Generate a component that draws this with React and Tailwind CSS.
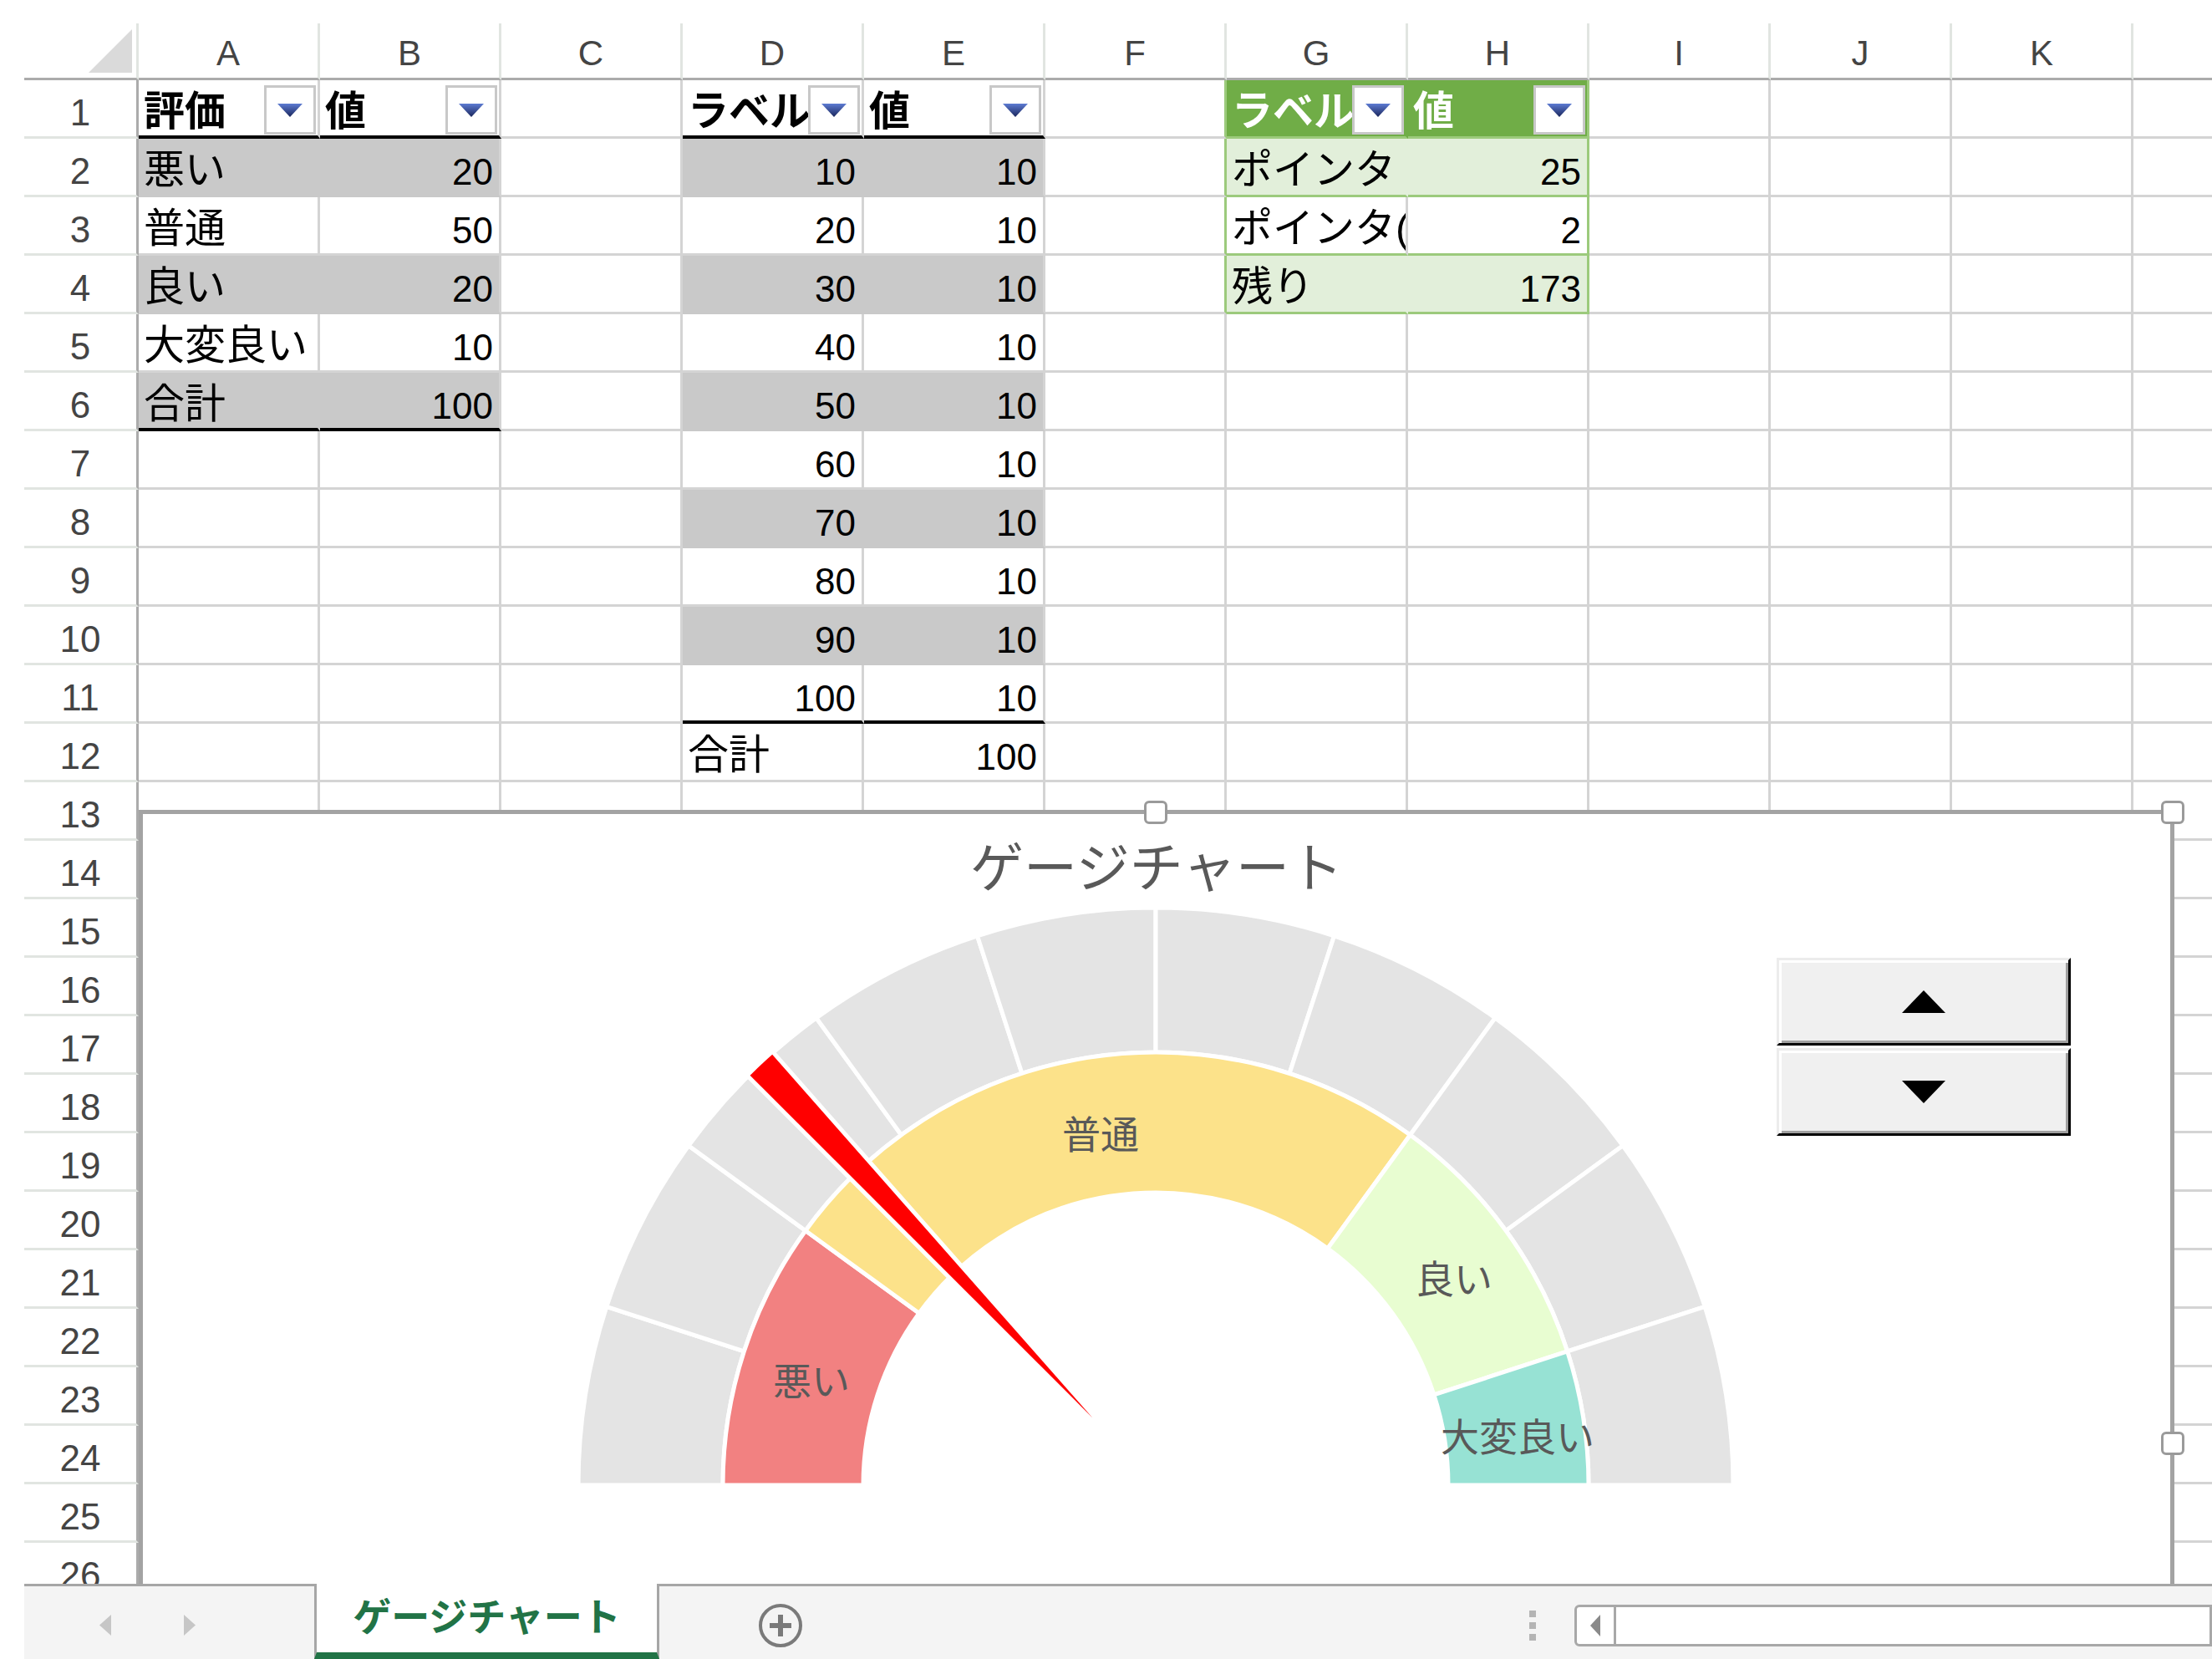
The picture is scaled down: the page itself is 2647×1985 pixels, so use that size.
import React from 'react';

const COLS = ['A', 'B', 'C', 'D', 'E', 'F', 'G', 'H', 'I', 'J', 'K', 'L'];

const BG = { white: 'bg-white', grey: 'bg-[#c9c9c9]', green: 'bg-[#70ad47]', lgreen: 'bg-[#e2efda]' };
const BR = {
  grid: 'border-r-[#d4d4d4]',
  grey: 'border-r-[#c9c9c9]',
  gline: 'border-r-[#9cca7c]',
  green: 'border-r-[#70ad47]',
  lgreen: 'border-r-[#e2efda]',
};
const BB = {
  grid: 'border-b-[3px] border-b-[#d4d4d4]',
  grey: 'border-b-[3px] border-b-[#c9c9c9]',
  black: 'border-b-[4px] border-b-black',
  gline: 'border-b-[3px] border-b-[#9cca7c]',
};

function buildCells() {
  const c = {};
  const set = (r, col, v) => {
    const k = r + col;
    c[k] = { ...(c[k] || {}), ...v };
  };
  set(1, 'A', { t: '評価', k: 'hdr', bb: 'black' });
  set(1, 'B', { t: '値', k: 'hdr', bb: 'black' });
  [['悪い', 20], ['普通', 50], ['良い', 20], ['大変良い', 10], ['合計', 100]].forEach(([l, v], i) => {
    const r = i + 2;
    const band = r % 2 === 0;
    const bb = r === 6 ? 'black' : band ? 'grey' : 'grid';
    set(r, 'A', { t: l, k: 'lbl', bg: band ? 'grey' : 'white', br: band ? 'grey' : 'grid', bb });
    set(r, 'B', { t: String(v), k: 'num', bg: band ? 'grey' : 'white', bb });
  });
  set(1, 'D', { t: 'ラベル', k: 'hdr', bb: 'black' });
  set(1, 'E', { t: '値', k: 'hdr', bb: 'black' });
  for (let i = 0; i < 10; i++) {
    const r = i + 2;
    const band = r % 2 === 0;
    const bb = r === 11 ? 'black' : band ? 'grey' : 'grid';
    set(r, 'D', { t: String((i + 1) * 10), k: 'num', bg: band ? 'grey' : 'white', br: band ? 'grey' : 'grid', bb });
    set(r, 'E', { t: '10', k: 'num', bg: band ? 'grey' : 'white', bb });
  }
  set(12, 'D', { t: '合計', k: 'lbl' });
  set(12, 'E', { t: '100', k: 'num' });
  for (let r = 1; r <= 4; r++) set(r, 'F', { br: 'gline' });
  set(1, 'G', { t: 'ラベル', k: 'ghdr', bg: 'green', br: 'green', bb: 'gline' });
  set(1, 'H', { t: '値', k: 'ghdr', bg: 'green', br: 'gline', bb: 'gline' });
  [['ポインタ', 25], ['ポインタ(幅)', 2], ['残り', 173]].forEach(([l, v], i) => {
    const r = i + 2;
    const band = r !== 3;
    set(r, 'G', { t: l, k: 'lbl', bg: band ? 'lgreen' : 'white', br: band ? 'lgreen' : 'grid', bb: 'gline' });
    set(r, 'H', { t: String(v), k: 'num', bg: band ? 'lgreen' : 'white', br: 'gline', bb: 'gline' });
  });
  return c;
}

const CELLS = buildCells();

function Dropdown() {
  return (
    <div className="mr-[2px] mt-[6px] flex h-[59px] w-[62px] shrink-0 items-center justify-center border-[3px] border-[#c8c8c8] bg-white">
      <svg width="30" height="16" viewBox="0 0 30 16">
        <defs>
          <linearGradient id="ddg" x1="0" y1="0" x2="0" y2="1">
            <stop offset="0" stopColor="#5d7bd2" />
            <stop offset="1" stopColor="#1a265c" />
          </linearGradient>
        </defs>
        <polygon points="0,0 30,0 15,16" fill="url(#ddg)" />
      </svg>
    </div>
  );
}

function Cell({ d }) {
  const bg = BG[d.bg || 'white'];
  const br = BR[d.br || 'grid'];
  const bb = BB[d.bb || 'grid'];
  return (
    <div className={`flex h-[70px] w-[217px] shrink-0 overflow-hidden border-r-[3px] ${br} ${bb} ${bg}`}>
      {d.k === 'lbl' && (
        <span className="block min-w-0 flex-1 overflow-hidden whitespace-nowrap pl-[6px] pt-[13px] text-[49px] leading-none text-black">
          {d.t}
        </span>
      )}
      {d.k === 'num' && (
        <span className="block min-w-0 flex-1 overflow-hidden whitespace-nowrap pr-[7px] pt-[18px] text-right text-[44px] leading-none text-black">
          {d.t}
        </span>
      )}
      {d.k === 'hdr' && (
        <>
          <span className="block min-w-0 flex-1 overflow-hidden whitespace-nowrap pl-[6px] pt-[13px] text-[49px] font-bold leading-none text-black">
            {d.t}
          </span>
          <Dropdown />
        </>
      )}
      {d.k === 'ghdr' && (
        <>
          <span className="block min-w-0 flex-1 overflow-hidden whitespace-nowrap pl-[6px] pt-[13px] text-[49px] font-bold leading-none text-white">
            {d.t}
          </span>
          <Dropdown />
        </>
      )}
    </div>
  );
}

const CX = 1383;
const CY = 1777;
const pt = (r, a, cx = CX, cy = CY) => [cx + r * Math.cos((a * Math.PI) / 180), cy - r * Math.sin((a * Math.PI) / 180)];
const seg = (r0, r1, a0, a1) => {
  const [x1, y1] = pt(r1, a0);
  const [x2, y2] = pt(r1, a1);
  const [x3, y3] = pt(r0, a1);
  const [x4, y4] = pt(r0, a0);
  return `M${x1} ${y1}A${r1} ${r1} 0 0 1 ${x2} ${y2}L${x3} ${y3}A${r0} ${r0} 0 0 0 ${x4} ${y4}Z`;
};

function Gauge() {
  const inner = [
    [180, 144, '#f28181'],
    [144, 54, '#fce28a'],
    [54, 18, '#e8fdd1'],
    [18, 0, '#97e2d4'],
  ];
  const outer = Array.from({ length: 10 }, (_, i) => [180 - i * 18, 162 - i * 18]);
  const [ax, ay] = pt(110, 133.2);
  const [p1x, p1y] = pt(580, 135, ax, ay);
  const [p2x, p2y] = pt(580, 131.4, ax, ay);
  const needle = `M${ax} ${ay}L${p1x} ${p1y}A580 580 0 0 1 ${p2x} ${p2y}Z`;
  const labels = [
    ['悪い', 971, 1669],
    ['普通', 1317, 1374],
    ['良い', 1740, 1547],
    ['大変良い', 1816, 1736],
  ];
  return (
    <svg className="absolute left-0 top-0" width="2426" height="1000" viewBox="171 974 2426 1000">
      {outer.map(([a0, a1], i) => (
        <path key={'o' + i} d={seg(518, 691, a0, a1)} fill="#e4e4e4" stroke="#ffffff" strokeWidth="5" />
      ))}
      {inner.map(([a0, a1, col], i) => (
        <path key={'i' + i} d={seg(350, 518, a0, a1)} fill={col} stroke="#ffffff" strokeWidth="5" />
      ))}
      {labels.map(([t, x, y]) => (
        <text
          key={t}
          x={x}
          y={y}
          textAnchor="middle"
          fontSize="46"
          fill="#595959"
          fontFamily="'Liberation Sans','Noto Sans CJK JP',sans-serif"
        >
          {t}
        </text>
      ))}
      <path d={needle} fill="#ff0000" stroke="#ffffff" strokeWidth="10" paintOrder="stroke" />
    </svg>
  );
}

function SpinBtn({ up }) {
  return (
    <div className="flex h-[105px] items-center justify-center border-[3px] border-b-black border-l-[#ececec] border-r-black border-t-[#ececec] bg-[#f0f0f0] shadow-[inset_3px_3px_0_#ffffff,inset_-3px_-3px_0_#a0a0a0]">
      <svg width="52" height="27" viewBox="0 0 52 27">
        {up ? <polygon points="26,0 52,27 0,27" fill="#000000" /> : <polygon points="0,0 52,0 26,27" fill="#000000" />}
      </svg>
    </div>
  );
}

function Chart() {
  return (
    <div className="absolute left-[166px] top-[969px] h-[1513px] w-[2436px] border-[5px] border-[#a3a3a3] bg-white">
      <Gauge />
      <div className="relative pt-[33px] text-center text-[64px] leading-none text-[#595959]">ゲージチャート</div>
      <div className="absolute left-[1955px] top-[172px] flex w-[352px] flex-col gap-[3px]">
        <SpinBtn up />
        <SpinBtn />
      </div>
    </div>
  );
}

function Handle({ cls }) {
  return <div className={`absolute h-[28px] w-[28px] rounded-[6px] border-[3px] border-[#9a9a9a] bg-white ${cls}`} />;
}

function Sheet() {
  const rows = Array.from({ length: 26 }, (_, i) => i + 1);
  return (
    <div className="relative h-[1895px] overflow-hidden pl-[29px] pt-[28px]">
      <div className="flex h-[68px] w-max">
        <div className="relative h-[68px] w-[137px] shrink-0 border-b-[3px] border-r-[3px] border-b-[#ababab] border-r-[#e1e5e1]">
          <svg className="absolute left-0 top-0" width="134" height="65" viewBox="0 0 134 65">
            <polygon points="129,7 129,59 77,59" fill="#dadada" />
          </svg>
        </div>
        {COLS.map((c) => (
          <div
            key={c}
            className="flex h-[68px] w-[217px] shrink-0 justify-center border-b-[3px] border-r-[3px] border-b-[#ababab] border-r-[#e1e5e1] pt-[15px] text-[42px] leading-none text-[#444444]"
          >
            {c}
          </div>
        ))}
      </div>
      {rows.map((r) => (
        <div key={r} className="flex h-[70px] w-max">
          <div className="flex h-[70px] w-[137px] shrink-0 justify-center border-b-[3px] border-r-[3px] border-b-[#e1e5e1] border-r-[#ababab] pt-[17px] text-[44px] leading-none text-[#444444]">
            {r}
          </div>
          {COLS.map((c) => (
            <Cell key={c} d={CELLS[r + c] || {}} />
          ))}
        </div>
      ))}
      <Chart />
      <Handle cls="left-[1369px] top-[958px]" />
      <Handle cls="left-[2586px] top-[958px]" />
      <Handle cls="left-[2586px] top-[1713px]" />
    </div>
  );
}

function TabBar() {
  return (
    <div className="flex h-[90px] pl-[29px]">
      <div className="flex w-[347px] shrink-0 items-center border-t-[3px] border-t-[#a6a6a6] bg-[#f4f4f4] pt-[6px]">
        <svg className="ml-[90px]" width="14" height="25" viewBox="0 0 14 25">
          <polygon points="14,0 14,25 0,12.5" fill="#c6c6c6" />
        </svg>
        <svg className="ml-[87px]" width="14" height="25" viewBox="0 0 14 25">
          <polygon points="0,0 0,25 14,12.5" fill="#c6c6c6" />
        </svg>
      </div>
      <div className="flex w-[413px] shrink-0 justify-center border-x-[3px] border-b-[8px] border-x-[#a6a6a6] border-b-[#217346] bg-white pt-[17px] text-[46px] font-bold leading-none text-[#217346]">
        ゲージチャート
      </div>
      <div className="flex flex-1 items-center border-t-[3px] border-t-[#a6a6a6] bg-[#f4f4f4] pt-[7px]">
        <svg className="ml-[117px] shrink-0" width="56" height="56" viewBox="0 0 56 56">
          <circle cx="28" cy="28" r="24" fill="none" stroke="#7a7a7a" strokeWidth="4" />
          <line x1="15" y1="28" x2="41" y2="28" stroke="#7a7a7a" strokeWidth="6" />
          <line x1="28" y1="15" x2="28" y2="41" stroke="#7a7a7a" strokeWidth="6" />
        </svg>
        <svg className="ml-[868px] shrink-0" width="8" height="36" viewBox="0 0 8 36">
          <rect x="0" y="0" width="8" height="8" fill="#b4b4b4" />
          <rect x="0" y="14" width="8" height="8" fill="#b4b4b4" />
          <rect x="0" y="28" width="8" height="8" fill="#b4b4b4" />
        </svg>
        <div className="ml-[46px] flex h-[50px] w-[50px] shrink-0 items-center justify-center rounded-l-[6px] border-[3px] border-[#a8a8a8] bg-white">
          <svg width="12" height="26" viewBox="0 0 12 26">
            <polygon points="12,0 12,26 0,13" fill="#8a8a8a" />
          </svg>
        </div>
        <div className="h-[50px] flex-1 border-y-[3px] border-r-[3px] border-[#a8a8a8] bg-white" />
      </div>
    </div>
  );
}

export default function App() {
  return (
    <div className="h-[1985px] w-[2647px] overflow-hidden bg-white font-['Liberation_Sans','Noto_Sans_CJK_JP',sans-serif]">
      <Sheet />
      <TabBar />
    </div>
  );
}
